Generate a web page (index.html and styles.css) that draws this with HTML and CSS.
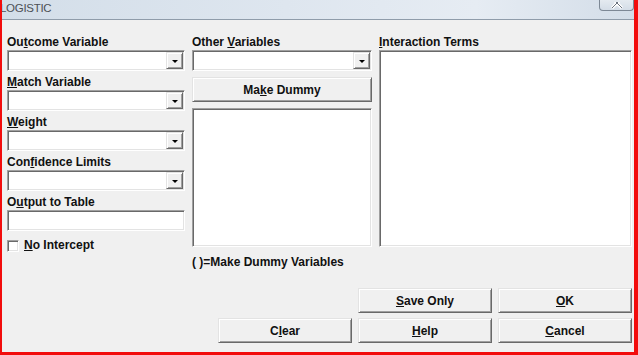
FILE: index.html
```html
<!DOCTYPE html>
<html lang="en">
<head>
  <meta charset="UTF-8" />
  <title>LOGISTIC</title>
  <link rel="stylesheet" href="styles.css">
</head>
<body>
  <div class="window">
    <div class="titlebar">
      <span class="title">LOGISTIC</span>
      <div class="close-btn">
        <svg width="12" height="7" viewBox="0 0 12 7">
          <path d="M1 -4 L6 1 L11 -4 M1 6 L6 1 L11 6" fill="none" stroke="#ffffff" stroke-width="3"/>
          <path d="M1 -4 L6 1 L11 -4 M1 6 L6 1 L11 6" fill="none" stroke="#6b7480" stroke-width="1"/>
        </svg>
      </div>
    </div>

    <div class="content">
      <div class="columns">
        <!-- left column -->
        <div class="col col-left">
          <div class="field">
            <label class="lbl">Ou<u>t</u>come Variable</label>
            <div class="combo"><span class="drop"></span></div>
          </div>
          <div class="field">
            <label class="lbl"><u>M</u>atch Variable</label>
            <div class="combo"><span class="drop"></span></div>
          </div>
          <div class="field">
            <label class="lbl"><u>W</u>eight</label>
            <div class="combo"><span class="drop"></span></div>
          </div>
          <div class="field">
            <label class="lbl">Con<u>f</u>idence Limits</label>
            <div class="combo"><span class="drop"></span></div>
          </div>
          <div class="field">
            <label class="lbl">O<u>u</u>tput to Table</label>
            <div class="textbox"></div>
          </div>
          <div class="check-row">
            <span class="checkbox"></span>
            <span class="lbl"><u>N</u>o Intercept</span>
          </div>
        </div>

        <!-- middle column -->
        <div class="col col-mid">
          <label class="lbl">Other <u>V</u>ariables</label>
          <div class="combo"><span class="drop"></span></div>
          <button class="btn btn-dummy">Ma<u>k</u>e Dummy</button>
          <div class="listbox listbox-dummy"></div>
          <div class="note">( )=Make Dummy Variables</div>
        </div>

        <!-- right column -->
        <div class="col col-right">
          <label class="lbl"><u>I</u>nteraction Terms</label>
          <div class="listbox listbox-terms"></div>
        </div>
      </div>

      <div class="actions">
        <span></span>
        <button class="btn"><u>S</u>ave Only</button>
        <button class="btn"><u>O</u>K</button>
        <button class="btn">C<u>l</u>ear</button>
        <button class="btn"><u>H</u>elp</button>
        <button class="btn"><u>C</u>ancel</button>
      </div>
    </div>
  </div>
</body>
</html>
```

FILE: styles.css
```css
* {
  box-sizing: border-box;
  margin: 0;
  padding: 0;
  font-family: 'Liberation Sans', Arial, sans-serif;
}

html, body {
  width: 638px;
  height: 355px;
  overflow: hidden;
  background: #f0f0f0;
}

/* Window frame (red outline) */
.window {
  width: 638px;
  height: 355px;
  display: flex;
  flex-direction: column;
  border-left: 2px solid #f20c0c;
  border-right: 4px solid #f20c0c;
  border-bottom: 3px solid #f20c0c;
  background: #f0f0f0;
}

/* Title bar */
.titlebar {
  height: 20px;
  display: flex;
  justify-content: space-between;
  align-items: flex-start;
  background: linear-gradient(to right, #d3dee9, #dee6ef 45%, #e6ecf3 75%, #d3dde8);
  border-bottom: 1px solid #8f9caa;
  overflow: hidden;
}

.title {
  font-size: 11.5px;
  line-height: 16px;
  color: #4c5056;
  margin-left: -2px;
  letter-spacing: -0.3px;
}

.close-btn {
  width: 35px;
  height: 11px;
  border: 1px solid #7d8895;
  border-top: none;
  border-radius: 0 0 4px 4px;
  background: linear-gradient(to bottom, #e4eaf0, #d4dde7);
  display: flex;
  justify-content: center;
  align-items: flex-start;
  padding-top: 2px;
}

/* Content */
.content {
  flex: 1;
  padding: 14px 2px 0 5px;
  display: flex;
  flex-direction: column;
}

.columns {
  display: flex;
  gap: 7px;
}

.col {
  display: flex;
  flex-direction: column;
}

.col-left { width: 178px; }
.col-mid { width: 180px; }
.col-right { width: 253px; }

.lbl {
  display: block;
  font-size: 12px;
  line-height: 15px;
  padding-top: 1px;
  font-weight: bold;
  color: #111;
  white-space: nowrap;
}

.field {
  margin-bottom: 3px;
}

/* Sunken boxes */
.combo,
.textbox,
.listbox {
  background: #fff;
  border: 1px solid;
  border-color: #a0a0a0 #ffffff #ffffff #a0a0a0;
  box-shadow: inset 1px 1px 0 #696969, inset -1px -1px 0 #e3e3e3;
}

.combo,
.textbox {
  height: 21px;
}

.combo {
  display: flex;
  justify-content: flex-end;
  padding: 1px;
}

.drop {
  width: 17px;
  height: 17px;
  background: #f0f0f0;
  border: 1px solid;
  border-color: #e3e3e3 #696969 #696969 #e3e3e3;
  box-shadow: inset 1px 1px 0 #ffffff, inset -1px -1px 0 #a0a0a0;
  display: flex;
  align-items: center;
  justify-content: center;
}

.drop::after {
  content: "";
  border-left: 3px solid transparent;
  border-right: 3px solid transparent;
  border-top: 3px solid #000;
  margin-top: 1px;
}

/* Checkbox */
.check-row {
  display: flex;
  align-items: center;
  gap: 5px;
  margin-top: 4px;
}

.check-row .lbl {
  padding-top: 0;
}

.checkbox {
  width: 12px;
  height: 12px;
  background: #fff;
  border: 1px solid;
  border-color: #a0a0a0 #ffffff #ffffff #a0a0a0;
  box-shadow: inset 1px 1px 0 #696969, inset -1px -1px 0 #e3e3e3;
}

/* Buttons */
.btn {
  height: 25px;
  background: #f0f0f0;
  border: 1px solid;
  border-color: #e3e3e3 #696969 #696969 #e3e3e3;
  box-shadow: inset 1px 1px 0 #ffffff, inset -1px -1px 0 #a0a0a0;
  font-size: 12px;
  font-weight: bold;
  color: #111;
  text-align: center;
}

.btn-dummy {
  margin-top: 6px;
}

.listbox-dummy {
  height: 139px;
  margin-top: 6px;
}

.listbox-terms {
  height: 197px;
}

.note {
  margin-top: 8px;
  font-size: 12px;
  line-height: 15px;
  font-weight: bold;
  color: #111;
}

/* Bottom buttons */
.actions {
  margin-top: 18px;
  display: grid;
  grid-template-columns: repeat(3, 134px);
  gap: 5px 6px;
  justify-content: end;
}
```
